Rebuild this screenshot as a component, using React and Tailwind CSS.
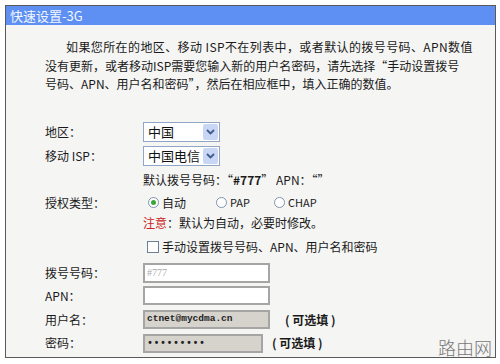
import React from "react";

function Select({ value }) {
  return (
    <div className="flex h-[20px] w-[77px] items-center border border-[#8fa6c4] bg-white">
      <span className="flex-1 pl-[4px] text-[13px] leading-none text-[#111]">{value}</span>
      <span className="mr-[1px] flex h-[16px] w-[15px] items-center justify-center rounded-[2px] bg-[#c9d7f4]">
        <svg width="9" height="6" viewBox="0 0 9 6">
          <path d="M1 1 L4.5 4.5 L8 1" stroke="#3f5a8c" strokeWidth="1.8" fill="none" />
        </svg>
      </span>
    </div>
  );
}

function Radio({ checked }) {
  return (
    <span className="flex h-[11px] w-[11px] items-center justify-center rounded-full border border-[#7f93ad] bg-white">
      {checked && <span className="h-[5px] w-[5px] rounded-full bg-[#3aa63a]" />}
    </span>
  );
}

function Row({ label, h = "h-[24px]", children }) {
  return (
    <div className={`flex items-center ${h}`}>
      <div className="w-[98px] shrink-0 whitespace-nowrap">{label}</div>
      <div className="flex items-center whitespace-nowrap">{children}</div>
    </div>
  );
}

export default function App() {
  return (
    <div className="relative h-[364px] w-[500px] overflow-hidden bg-white font-['Noto_Sans_CJK_SC',sans-serif] text-[12px] text-[#1a1a1a]">
      <div className="ml-[5px] mt-[5px] flex h-[353px] w-[491px] flex-col border border-[#5a5a5a] bg-[#f5f5f4]">
        <div className="flex h-[19px] items-center bg-[#5d90f2] pl-[4px] text-[13px] text-[#f2f6ff]">
          快速设置-3G
        </div>
        <div className="whitespace-nowrap pl-[39px] pt-[13px] text-[12px] leading-[18.5px]">
          <div className="pl-[21px] tracking-[0.4px]">如果您所在的地区、移动 ISP不在列表中，或者默认的拨号号码、APN数值</div>
          <div>没有更新，或者移动ISP需要您输入新的用户名密码，请先选择“手动设置拨号</div>
          <div>号码、APN、用户名和密码”，然后在相应框中，填入正确的数值。</div>
        </div>
        <div className="mt-[26px] flex flex-col pl-[39px]">
          <Row label="地区：">
            <Select value="中国" />
          </Row>
          <Row label="移动 ISP：">
            <Select value="中国电信" />
          </Row>
          <Row label="">
            <span>默认拨号号码：“<b>#777</b>” APN：“”</span>
          </Row>
          <Row label="授权类型：" h="h-[22px]">
            <div className="flex items-center pl-[5px]">
              <div className="flex w-[68px] items-center gap-[3px]">
                <Radio checked />
                <span>自动</span>
              </div>
              <div className="flex w-[58px] items-center gap-[3px]">
                <Radio />
                <span className="text-[11px]">PAP</span>
              </div>
              <div className="flex items-center gap-[3px]">
                <Radio />
                <span className="text-[11px]">CHAP</span>
              </div>
            </div>
          </Row>
          <Row label="" h="h-[18px]">
            <span>
              <span className="text-[#cc2222]">注意</span>：默认为自动，必要时修改。
            </span>
          </Row>
          <Row label="" h="h-[30px]">
            <div className="flex items-center pl-[4px]">
              <span className="mr-[3px] h-[12px] w-[12px] border border-[#6f7f95] bg-white" />
              <span>手动设置拨号号码、APN、用户名和密码</span>
            </div>
          </Row>
          <Row label="拨号号码：" h="h-[22px]">
            <div className="flex h-[20px] w-[127px] items-center border-2 border-[#a5a5a5] bg-white pl-[2px] font-['Liberation_Serif',serif] text-[10px] text-[#aaa]">
              #777
            </div>
          </Row>
          <Row label="APN：">
            <div className="h-[19px] w-[127px] border-2 border-[#a5a5a5] bg-white" />
          </Row>
          <Row label="用户名：">
            <div className="flex h-[19px] w-[127px] items-center border-2 border-[#a5a5a5] bg-[#d6d3cd] pl-[2px] font-['Liberation_Mono',monospace] text-[9.5px] font-bold text-[#222]">
              ctnet@mycdma.cn
            </div>
            <span className="ml-[15px] font-bold">( 可选填 )</span>
          </Row>
          <Row label="密码：" h="h-[23px]">
            <div className="flex h-[19px] w-[120px] items-center border-2 border-[#a5a5a5] bg-[#d6d3cd] pl-[2px] font-['Liberation_Mono',monospace] text-[10px] font-bold tracking-[0.5px] text-[#222]">
              •••••••••
            </div>
            <span className="ml-[9px] font-bold">( 可选填 )</span>
          </Row>
        </div>
      </div>
      <div className="absolute left-[438px] top-[338px] text-[18px] font-light leading-none text-[#777]">
        路由网
      </div>
    </div>
  );
}
